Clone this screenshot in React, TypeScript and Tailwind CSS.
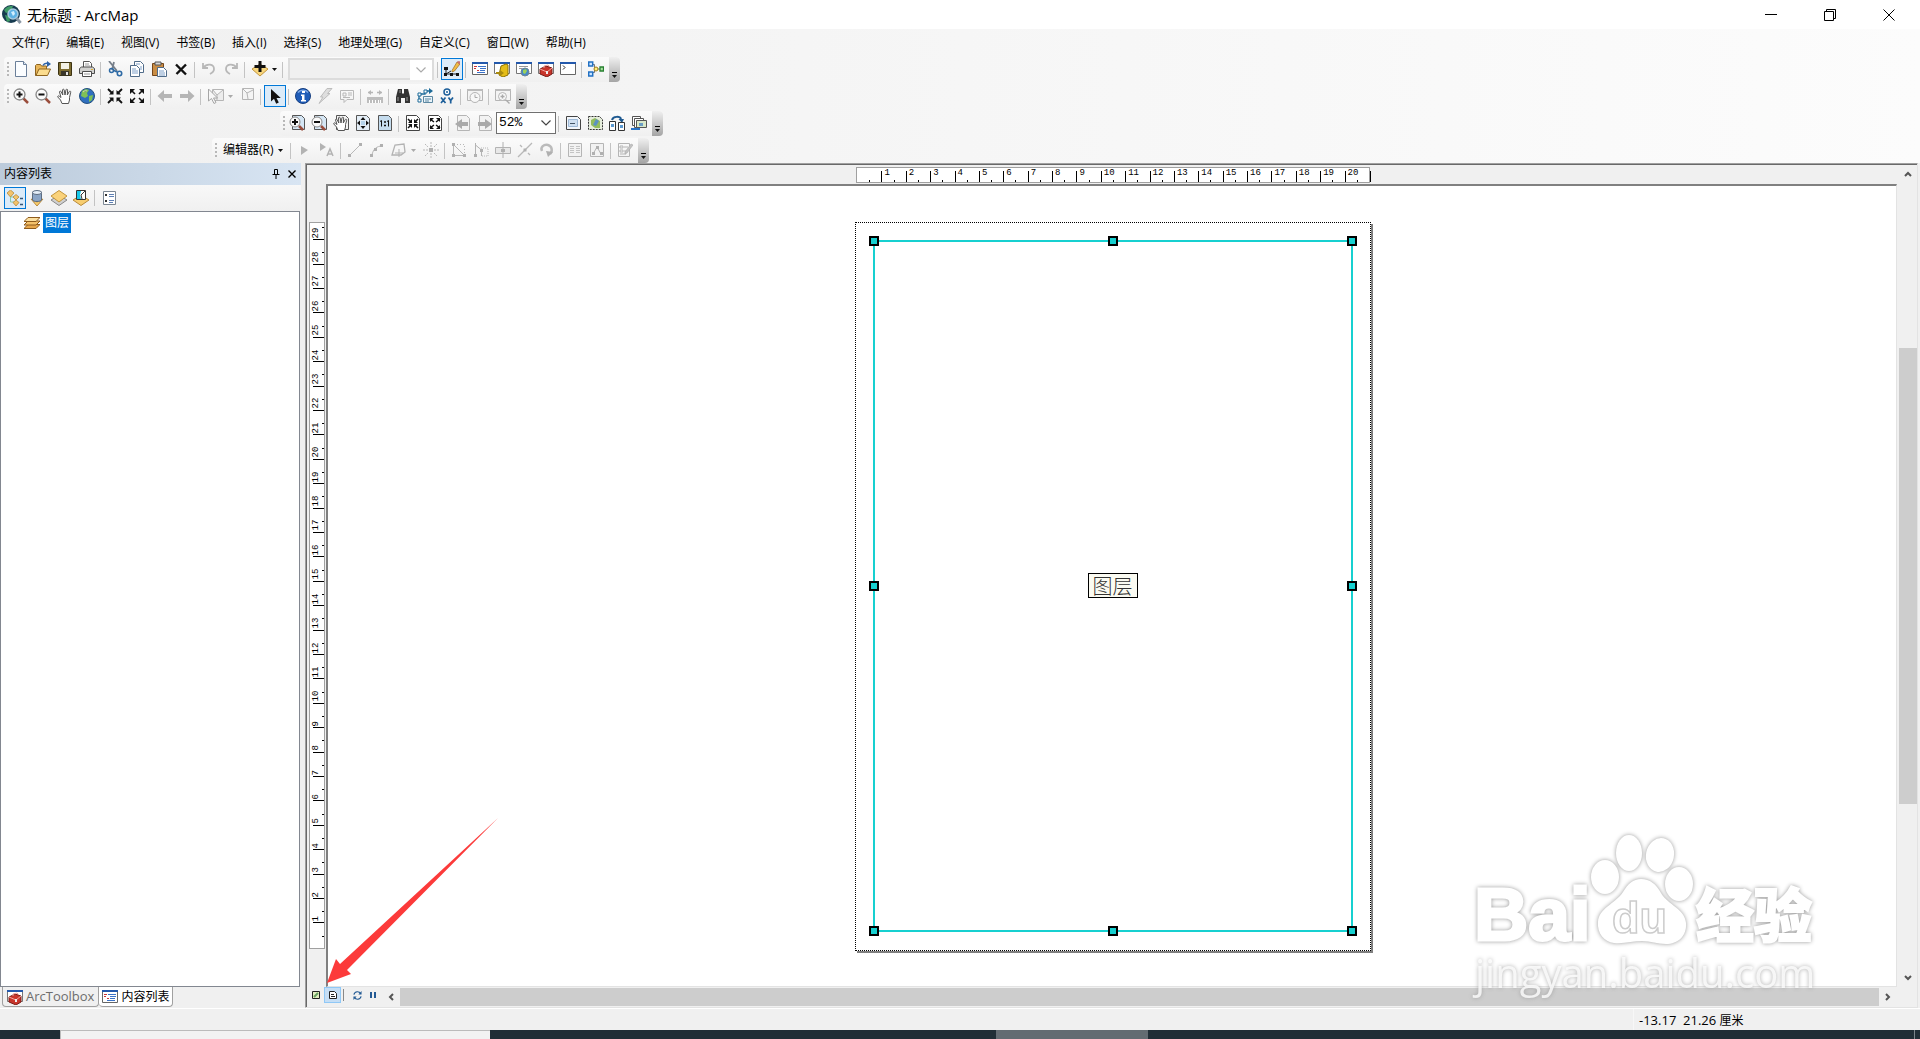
import type { ReactNode } from 'react'
import clsx from 'clsx'

const icons: Record<string, ReactNode> = {
  new: (
    <>
      <path d="M2.5.5h8l3 3v12h-11z" fill="#fbfdff" stroke="#6b7f99" />
      <path d="M10.500.5v3h3" fill="#dce8f5" stroke="#6b7f99" />
    </>
  ),
  open: (
    <>
      <path d="M.5 14.500v-10l1-1h4l1 1.500h5v9.500z" fill="#e8b65a" stroke="#8d6420" />
      <path d="M1 14.500 4 8h11.500l-3 6.500z" fill="#fbdc8e" stroke="#8d6420" />
      <path d="M8 4.500C9 2.500 10.500 2 13 2.500" fill="none" stroke="#2c62a8" strokeWidth="1.500" />
      <path d="M12 0l4 3-4 3z" fill="#2c62a8" />
    </>
  ),
  save: (
    <>
      <path d="M1.500 1.500h13v13h-12l-1-1z" fill="#7c6b30" stroke="#3b3212" />
      <path d="M4 2h8v6H4z" fill="#f3f1e6" />
      <path d="M4 10h8v4.500H4z" fill="#39362b" />
      <path d="M9 11h2v3H9z" fill="#e6e6e6" />
    </>
  ),
  print: (
    <>
      <path d="M4.500 6.500v-6h6l2 2v4" fill="#fff" stroke="#555" />
      <path d="M.5 7.500l2-1.500h11l2 1.500v5H.5z" fill="#d2d2d0" stroke="#4d4d4d" />
      <path d="M3.500 10.500h9v5h-9z" fill="#fff" stroke="#4d4d4d" />
      <path d="M12 8h2v1h-2z" fill="#e0b030" />
      <path d="M6 3h4M6 5h5M5 13h6" stroke="#999" />
    </>
  ),
  cut: (
    <>
      <path d="M2 0l8 10M7 1 5 9" stroke="#777f8a" strokeWidth="1.800" />
      <circle cx="4.500" cy="9.500" r="2" fill="none" stroke="#2e6aa5" strokeWidth="1.500" />
      <circle cx="12.500" cy="12.500" r="2.200" fill="none" stroke="#2e6aa5" strokeWidth="1.600" />
      <path d="M6 9l4 2" stroke="#2e6aa5" strokeWidth="1.500" />
    </>
  ),
  copy: (
    <>
      <path d="M5.500.5h6l3 3v8h-9z" fill="#fff" stroke="#4f6b89" />
      <path d="M1.500 4.500h6l3 3v8h-9z" fill="#fff" stroke="#4f6b89" />
      <path d="M3 8h4M3 10h6M3 12h6M7 3h4M11 6h2M11 8h2" stroke="#7fa0c8" />
    </>
  ),
  paste: (
    <>
      <path d="M1.500 2.500h11v12h-11z" fill="#c98d45" stroke="#74461a" />
      <path d="M4 1h6v3H4z" fill="#d8d8d8" stroke="#555" />
      <path d="M6.500 6.500h6l3 3v6h-9z" fill="#fff" stroke="#4f6b89" />
      <path d="M8 10h5M8 12h6M8 14h6" stroke="#7fa0c8" />
    </>
  ),
  remove: <path d="M3 3.500l10 10M13 3.500l-9.500 9.500" stroke="#111" strokeWidth="2.400" />,
  undo: <path d="M2 2v5h5M2.500 6.500C6 2 13 3 13 8c0 3-2 4-4 5" fill="none" stroke="#b8b8b8" strokeWidth="1.800" />,
  redo: <path d="M14 2v5H9M13.500 6.500C10 2 3 3 3 8c0 3 2 4 4 5" fill="none" stroke="#b8b8b8" strokeWidth="1.800" />,
  addData: (
    <>
      <path d="M0 8l8-5 8 5-8 7z" fill="#f8d67c" stroke="#c3953c" />
      <path d="M6.500 0h3v4h4v3h-4v4h-3V7h-4V4h4z" fill="#111" />
    </>
  ),
  editor: (
    <>
      <path d="M2 7v6h12M2 13l5-3" fill="none" stroke="#222" />
      <path d="M0 6h4v3H0zM0 12h3v3H0zM6 12h3v3H6zM12 12h3v3h-3z" fill="#111" />
      <path d="M8 9.500 13 1l3 2-5.500 7L8 11z" fill="#f2bd45" stroke="#9a6a24" strokeWidth=".7" />
      <path d="M13 .5l2.500-.5 1 2-1.500 1.500z" fill="#c9706e" />
    </>
  ),
  contents: (
    <>
      <path d="M.5 1.500h15v12H.5z" fill="#fff" stroke="#666" />
      <path d="M0 1h16v2H0z" fill="#2358ab" />
      <path d="M2 5.500h3M5 9.500h2M2 7.500h2" stroke="#c33" />
      <path d="M6 5.500h8M8 7.500h6M8 9.500h5M5 11.500h8" stroke="#3a72c8" />
    </>
  ),
  catalog: (
    <>
      <path d="M.5 1.500h15v11H.5z" fill="#fff" stroke="#777" />
      <path d="M0 1h16v2H0z" fill="#2358ab" />
      <path d="M7 5l5-2 2 1v10l-5 2-4-2z" fill="#e5bd17" stroke="#8f7200" />
      <path d="M2 11h4v-2l4 3-4 3v-2H2z" fill="#a98b10" />
    </>
  ),
  search: (
    <>
      <path d="M.5 1.500h15v11H.5z" fill="#fff" stroke="#777" />
      <path d="M0 1h16v2H0z" fill="#2358ab" />
      <path d="M3 5.500h9M3 7.500h3" stroke="#999" />
      <circle cx="9" cy="11" r="4" fill="#4688c9" stroke="#6c8496" />
      <path d="M7 9l3-1 1 2-2 3-2-1z" fill="#9bd15a" />
    </>
  ),
  toolbox: (
    <>
      <path d="M.5 1.500h15v11H.5z" fill="#fff" stroke="#777" />
      <path d="M0 1h16v2H0z" fill="#2358ab" />
      <path d="M2 8l6-3 6 2v6l-5 3-7-3z" fill="#c8352b" stroke="#7b1c17" />
      <path d="M2 8l7 3 5-4M6 7V5l4-1 2 2" fill="none" stroke="#f3a59e" />
      <path d="M8 10h2v3H8z" fill="#eee" />
    </>
  ),
  python: (
    <>
      <path d="M.5 1.500h15v12H.5z" fill="#fff" stroke="#666" />
      <path d="M0 1h16v2H0z" fill="#2358ab" />
      <path d="M3 4.500l2 2-2 2" fill="none" stroke="#222" />
    </>
  ),
  model: (
    <>
      <path d="M5 3.500h1.500v8H5M7 8h8" fill="none" stroke="#777" />
      <path d="M.7 1h4v4h-4zM.7 11h4v4h-4z" fill="#cfe6ff" stroke="#2271c4" strokeWidth="1.500" />
      <circle cx="8" cy="8" r="2" fill="#fff07a" stroke="#a17d1a" />
      <path d="M12 6h3.500v4H12z" fill="#a8e0a0" stroke="#278030" strokeWidth="1.300" />
    </>
  ),
  zoomIn: (
    <>
      <path d="M10 10l5 5" stroke="#9a4d3c" strokeWidth="2.500" />
      <circle cx="6.500" cy="6.500" r="5.500" fill="#fafafa" stroke="#888" strokeWidth="1.300" />
      <path d="M3.500 6.500h6M6.500 3.500v6" stroke="#111" strokeWidth="2" />
    </>
  ),
  zoomOut: (
    <>
      <path d="M10 10l5 5" stroke="#9a4d3c" strokeWidth="2.500" />
      <circle cx="6.500" cy="6.500" r="5.500" fill="#fafafa" stroke="#888" strokeWidth="1.300" />
      <path d="M3.500 6.500h6" stroke="#111" strokeWidth="2" />
    </>
  ),
  hand: (
    <path
      d="M5 15.500 3.500 12 .8 9c-.5-1 .8-1.600 1.500-.8L4 9.500 2.500 4c0-1.200 1.300-1.200 1.700-.2L5.800 7 5.500 2c.2-1.200 1.500-1 1.700 0l.8 5L9 1.800c.4-1 1.600-.8 1.600.3L10.300 7l2-3.500c.7-.8 1.700-.2 1.400.8L12.500 9.500v2.500l-1 3.500z"
      fill="#fff"
      stroke="#555"
    />
  ),
  globe: (
    <>
      <circle cx="8" cy="8" r="7.500" fill="#2f6fbe" stroke="#24507f" />
      <path d="M3 3c3-2 5-2 7-1l-2 3 1 3-3 2-4-2zM10 8l4-1-1 5-3 2z" fill="#7fc256" />
      <path d="M4 4c1-1 3-1.500 4-1" stroke="#dff0c5" />
    </>
  ),
  fixedIn: (
    <>
      <path d="M1 1l4 4M15 1l-4 4M1 15l4-4M15 15l-4-4" stroke="#111" strokeWidth="1.800" />
      <path d="M6.500 2v4.500H2zM9.500 2v4.500H14zM6.500 14V9.500H2zM9.500 14V9.500H14z" fill="#111" />
    </>
  ),
  fixedOut: (
    <>
      <path d="M2 2l4 4M14 2l-4 4M2 14l4-4M14 14l-4-4" stroke="#111" strokeWidth="1.600" />
      <path d="M1 1h5L1 6zM15 1h-5l5 5zM1 15h5l-5-5zM15 15h-5l5-5z" fill="#111" />
    </>
  ),
  back: <path d="M7 2v4h8v4H7v4L.5 8z" fill="#b5b5b5" />,
  forward: <path d="M9 2v4H1v4h8v4l6.500-6z" fill="#b5b5b5" />,
  selectFeature: (
    <>
      <path d="M4.500 1.500h11v11h-11zM5 2l4 5 6-5M9 7v5" fill="#ececec" stroke="#b5b5b5" />
      <path d="M.5 1v12l3-2.500 2.500 5 2-1-2.500-4.500h4z" fill="#f7f7f7" stroke="#a6a6a6" />
    </>
  ),
  clear: <path d="M3.500.5h11v11h-11zM4 1l4 4 6-3M8 5l1 6" fill="#f4f4f4" stroke="#b5b5b5" />,
  pointer: <path d="M4 1v12.500l3-2.800 2.200 5 2.600-1.200L9.500 10h4.300z" fill="#111" />,
  info: (
    <>
      <circle cx="8" cy="8" r="7.500" fill="#1f5cb8" stroke="#173f80" />
      <path d="M3 4.500C5 1.500 11 1.500 13 4.500" stroke="#7fa9e6" fill="none" strokeWidth="1.500" />
      <path d="M7 3h3v2H7zM6 6.500h3.500V12H11v1.500H6V12h1V8H6z" fill="#fff" />
    </>
  ),
  bolt: <path d="M10 .5h5L10.500 5.500H13L2 15.500 6 9H3.500z" fill="#dedede" stroke="#bcbcbc" />,
  popup: <path d="M1.500 2.500h13v9H8l-3 3v-3H1.500zM4 5h3v3H4zM9 5h4M9 7h4M4 9.500h7" fill="none" stroke="#b8b8b8" />,
  measure: (
    <>
      <path d="M1 4.500h5M10 4.500h5" stroke="#b5b5b5" strokeWidth="1.500" />
      <path d="M4 2v5L1 4.500zM12 2v5l3-2.500z" fill="#b5b5b5" />
      <path d="M0 9h16v6H0z" fill="#bdbdbd" />
      <path d="M2.500 12v3M5.500 12v3M8.500 12v3M11.500 12v3M13.500 12v3" stroke="#fff" />
    </>
  ),
  find: (
    <>
      <path d="M3 1h4v4l1 1 1-1V1h4l2 8v6h-5v-5H6v5H1V9z" fill="#333" />
      <path d="M3 9v4M12 9v4M5 2v3" stroke="#999" />
    </>
  ),
  route: (
    <>
      <path d="M2 12V6h6V3h6" fill="none" stroke="#1d6a98" strokeWidth="1.300" />
      <path d="M12 0l4 3-4 3z" fill="#1d6a98" />
      <path d="M1 5h3v3H1zM1 11h3v3H1zM7 2h3v3H7z" fill="#fff" stroke="#1d6a98" />
      <path d="M6.500 8.500h9v6h-9z" fill="#eaf4fa" stroke="#5c88a2" />
      <path d="M8 11h6M8 13h4" stroke="#5c88a2" />
    </>
  ),
  xy: (
    <>
      <circle cx="8" cy="4" r="3" fill="#fff" stroke="#1d5f9a" strokeWidth="1.500" />
      <circle cx="8" cy="4" r="1" fill="#1d5f9a" />
      <path d="M2 9.500l4.500 5.500M6.500 9.500 2 15M9.500 9.500l2.200 3 2.300-3M11.700 12v3.500" fill="none" stroke="#1d5f9a" strokeWidth="1.700" />
    </>
  ),
  time: (
    <>
      <path d="M.5 1.500h15v11H.5z" fill="#f4f4f4" stroke="#b5b5b5" />
      <path d="M0 1h16v2H0z" fill="#bcbcbc" />
      <circle cx="8" cy="9.500" r="5" fill="#f8f8f8" stroke="#b5b5b5" />
      <path d="M8 6.500v3h2.500" fill="none" stroke="#aaa" />
    </>
  ),
  viewer: (
    <>
      <path d="M.5 1.500h15v11H.5z" fill="#f4f4f4" stroke="#b5b5b5" />
      <path d="M0 1h16v2H0z" fill="#bcbcbc" />
      <circle cx="7.500" cy="8.500" r="4" fill="#f8f8f8" stroke="#b5b5b5" />
      <path d="M5.500 8.500h4M7.500 6.500v4M11 12l3.500 3.500" stroke="#aaa" strokeWidth="1.400" />
    </>
  ),
  pageZoomIn: (
    <>
      <path d="M3.500.5h9l3 3v11h-12z" fill="#d5e6f4" stroke="#555" />
      <path d="M10 11l4 4" stroke="#9a4d3c" strokeWidth="2.500" />
      <circle cx="6" cy="7" r="5" fill="#fafafa" stroke="#888" />
      <path d="M3 7h6M6 4v6" stroke="#111" strokeWidth="2" />
    </>
  ),
  pageZoomOut: (
    <>
      <path d="M3.500.5h9l3 3v11h-12z" fill="#d5e6f4" stroke="#555" />
      <path d="M10 11l4 4" stroke="#9a4d3c" strokeWidth="2.500" />
      <circle cx="6" cy="7" r="5" fill="#fafafa" stroke="#888" />
      <path d="M3 7h6" stroke="#111" strokeWidth="2" />
    </>
  ),
  pageHand: (
    <>
      <path d="M3.500.5h9l3 3v11h-12z" fill="#f3f3f3" stroke="#555" />
      <path
        d="M5 15.500 3.500 12 .8 9c-.5-1 .8-1.600 1.500-.8L4 9.500 2.500 5c0-1.200 1.300-1.200 1.700-.2L5.800 8 5.500 3c.2-1.200 1.500-1 1.700 0l.8 5L9 2.800c.4-1 1.600-.8 1.600.3L10.300 8l2-3.500c.7-.8 1.700-.2 1.400.8L12.500 9.500v2.500l-1 3.500z"
        fill="#fff"
        stroke="#555"
      />
    </>
  ),
  pageFull: (
    <>
      <path d="M1.500.5h10l3 3v12h-13z" fill="#e4eef7" stroke="#555" />
      <path d="M8 2l2.500 3h-5zM8 14l2.500-3h-5zM2 8l3-2.500v5zM14 8l-3-2.500v5z" fill="#111" />
      <path d="M6 6h4v4H6z" fill="#b5d3ea" />
    </>
  ),
  pageActual: (
    <>
      <path d="M1.500.5h10l3 3v12h-13z" fill="#c5dcee" stroke="#555" />
      <path d="M3 6.500 4.500 5.500v6M7.500 6.500h1v1h-1zM7.500 10h1v1h-1zM10 6.500l1.500-1v6" fill="none" stroke="#111" />
    </>
  ),
  pageFixedIn: (
    <>
      <path d="M1.500.5h10l3 3v12h-13z" fill="#fff" stroke="#444" />
      <path d="M3 4l3 3M13 4l-3 3M3 13l3-3M13 13l-3-3" stroke="#111" strokeWidth="1.500" />
      <path d="M7 4v4H3zM9 4v4h4zM7 13V9H3zM9 13V9h4z" fill="#111" />
    </>
  ),
  pageFixedOut: (
    <>
      <path d="M1.500.5h10l3 3v12h-13z" fill="#fff" stroke="#444" />
      <path d="M3 4l4 3M13 4 9 7M3 13l4-3M13 13l-4-3" stroke="#111" strokeWidth="1.500" />
      <path d="M3 3h4L3 7zM13 3H9l4 4zM3 14h4l-4-4zM13 14H9l4-4z" fill="#111" />
    </>
  ),
  pageBack: (
    <>
      <path d="M2.500.5h9l3 3v12h-12z" fill="#f3f3f3" stroke="#b5b5b5" />
      <path d="M7 4v3h6v4H7v3L0 9z" fill="#aaa" />
    </>
  ),
  pageForward: (
    <>
      <path d="M2.500.5h9l3 3v12h-12z" fill="#f3f3f3" stroke="#b5b5b5" />
      <path d="M8 4v3H1v4h7v3l7-5z" fill="#aaa" />
    </>
  ),
  draft: (
    <>
      <path d="M1.500 1.500h11l3 3v10h-14z" fill="#f2f6fb" stroke="#444" />
      <path d="M3.500 4.500h9v7h-9z" fill="#d0e0f1" stroke="#9db8d6" />
      <path d="M5 8.500h5" stroke="#456" />
    </>
  ),
  focus: (
    <>
      <path d="M1.500 1.500h11l3 3v10h-14z" fill="#e6eedd" stroke="#333" strokeDasharray="2 1" />
      <path d="M4 5l4-2 5 3v7H8l-4-3z" fill="#94bd5d" />
      <path d="M9 4l3 2-3 5-3-1z" fill="#5b92c4" />
    </>
  ),
  changeLayout: (
    <>
      <path d="M3 5c1-4 8-4 9-1" fill="none" stroke="#1f5a91" strokeWidth="2" />
      <path d="M9.500 4H15l-2 4z" fill="#1f5a91" />
      <path d="M.5 6.500h6v9h-6zM9.500 7.500h6v8h-6z" fill="#fff" stroke="#333" />
      <path d="M2 9h3v3H2zM11 10h3v3h-3z" fill="#5c9ad1" />
    </>
  ),
  drivenPages: (
    <>
      <path d="M1.500 1.500h8v9h-8z" fill="#fff" stroke="#555" />
      <path d="M3.500 3.500h9v9h-9z" fill="#fff" stroke="#555" />
      <path d="M5.500 5.500h10v7h-10z" fill="#d9e8c9" stroke="#555" />
      <path d="M8 8h4v3H8z" fill="#6a9ec5" />
      <path d="M0 13h9v2H0z" fill="#2873c7" />
    </>
  ),
  editTool: <path d="M4 4v9l7-5z" fill="#b3b3b3" />,
  editAnno: (
    <>
      <path d="M1 1v8l6-4z" fill="#b3b3b3" />
      <path d="M8 14l3-7 3 7M9 12h4" fill="none" stroke="#b3b3b3" strokeWidth="1.500" />
    </>
  ),
  line: (
    <>
      <path d="M3 13 13 3" stroke="#b8b8b8" />
      <path d="M1 12h3v3H1zM12 1h3v3h-3z" fill="#b0b0b0" />
    </>
  ),
  arc: (
    <>
      <path d="M3 13C4 7 8 4 13 4" fill="none" stroke="#b8b8b8" />
      <path d="M1 12h3v3H1zM5 6h3v3H5zM11 2h3v3h-3z" fill="#b0b0b0" />
    </>
  ),
  trace: (
    <>
      <path d="M1 13 4 3l9-1 1 8-4 3z" fill="none" stroke="#b3b3b3" strokeWidth="1.300" />
      <path d="M8 7v8M4 11h8" stroke="#b3b3b3" />
    </>
  ),
  point: (
    <>
      <path d="M8 0v5M8 11v5M0 8h5M11 8h5M2 2l3 3M11 11l3 3M2 14l3-3M11 5l3-3" stroke="#b8b8b8" strokeDasharray="2 1" />
      <path d="M6 6h4v4H6z" fill="#b0b0b0" />
    </>
  ),
  vertices: (
    <>
      <path d="M2.500 13.500v-11l11 11z" fill="none" stroke="#b8b8b8" />
      <path d="M3 2.500h10.500v11" fill="none" stroke="#b8b8b8" strokeDasharray="1 2" />
      <path d="M1 1h3v3H1zM1 12h3v3H1zM12 12h3v3h-3z" fill="#b0b0b0" />
    </>
  ),
  reshape: (
    <>
      <path d="M2.500 1v13.500M2.500 3l6 5v6" fill="none" stroke="#b3b3b3" />
      <path d="M8 6h7v8H8" fill="none" stroke="#b8b8b8" strokeDasharray="1 1" />
      <path d="M1 12h3v3H1zM7 7h3v3H7z" fill="#b0b0b0" />
    </>
  ),
  cutPoly: (
    <>
      <path d="M.5 5.500h15v6H.5z" fill="#e8e8e8" stroke="#b3b3b3" />
      <path d="M8 0v16" stroke="#b0b0b0" />
      <path d="M6 7h4v3H6z" fill="#b0b0b0" />
    </>
  ),
  split: (
    <>
      <path d="M1 15 15 1M3 3l2 2M11 11l2 2" stroke="#b8b8b8" strokeWidth="1.300" />
      <path d="M6.500 6.500h3v3h-3z" fill="#b0b0b0" />
    </>
  ),
  rotate: (
    <>
      <path d="M3 9C1 5 5 2 9 3c4 1 5 6 2 9" fill="none" stroke="#bbb" strokeWidth="2.500" />
      <path d="M7 9l7 1-5 5z" fill="#b0b0b0" />
    </>
  ),
  attributes: (
    <>
      <path d="M1.500 1.500h13v13h-13z" fill="#f2f2f2" stroke="#b5b5b5" />
      <path d="M3 4.500h4M9 4.500h4M3 6.500h4M9 6.500h4M3 8.500h4M9 8.500h4M3 10.500h4M9 10.500h4" stroke="#c4c4c4" />
    </>
  ),
  sketch: (
    <>
      <path d="M1.500 1.500h13v13h-13z" fill="#f2f2f2" stroke="#b5b5b5" />
      <path d="M4 12 8 5l4 7" fill="none" stroke="#b5b5b5" />
      <path d="M3 10h3v3H3zM7 4h3v3H7zM11 10h3v3h-3z" fill="#b0b0b0" />
    </>
  ),
  template: (
    <>
      <path d="M1.500 1.500h11v13h-11zM3 4h3v2H3zM3 8h3v2H3zM7 5h4M7 9h3M3 12h6" fill="none" stroke="#b5b5b5" />
      <path d="M8 10l6-8 2 1-6 8-2 1z" fill="#c4c4c4" stroke="#aaa" strokeWidth=".6" />
    </>
  ),
  byOrder: (
    <>
      <path d="M3.500 4v8h5M3.500 7h5" fill="none" stroke="#8ca" />
      <path d="M0 3l3.500-3L7 3 3.500 7zM6 7l3-2.500L12 7 9 10zM6 12.500l3-2.500 3 2.500L9 16z" fill="#f3c46c" stroke="#b98a3a" strokeWidth=".8" />
      <path d="M13 8.500h3M13 14.500h3" stroke="#357" strokeWidth="1.500" />
    </>
  ),
  bySource: (
    <>
      <path d="M2 9l6 3 6-3-6 7z" fill="#f7cd6f" stroke="#b98a3a" />
      <path d="M3.500 2v8c1 2 8 2 9 0V2z" fill="#8ba5c6" stroke="#5c6c80" />
      <ellipse cx="8" cy="2.500" rx="4.500" ry="2" fill="#e5eef8" stroke="#5c6c80" />
    </>
  ),
  byVisibility: (
    <>
      <path d="M0 10l8-5 8 5-8 5.500z" fill="#d0d0d0" stroke="#888" />
      <path d="M0 6l8-5.500L16 6l-8 6z" fill="#fad27a" stroke="#c3953c" />
    </>
  ),
  bySelection: (
    <>
      <path d="M0 10l8-5 8 5-8 5.500z" fill="#f7cd6f" stroke="#b98a3a" />
      <path d="M3.500.5h9v9h-9z" fill="#fff" stroke="#333" />
      <path d="M4 1h4l-1 4 1 4H4z" fill="#17c8e8" />
      <path d="M12 1 8 5l1 4" fill="none" stroke="#333" />
    </>
  ),
  options: (
    <>
      <path d="M2.500 1.500h12v13h-12z" fill="#fff" stroke="#7b8794" />
      <path d="M4 4h2v2H4zM4 10h2v2H4z" fill="#333" />
      <path d="M8 4.500h5M8 6.500h5M8 10.500h5M8 12.500h4" stroke="#5d7fb4" />
    </>
  ),
  layers: (
    <>
      <path d="M0 13.500l4-4h12l-4 4z" fill="#e8a84c" stroke="#8e5b1c" />
      <path d="M0 10l4-4h12l-4 4z" fill="#f5c26b" stroke="#8e5b1c" />
      <path d="M0 6.500l4-4h12l-4 4z" fill="#fce0a0" stroke="#8e5b1c" />
    </>
  ),
}

function Icon({ name, className = 'size-4' }: { name: string; className?: string }) {
  return (
    <svg viewBox="0 0 16 16" className={clsx('shrink-0', className)} aria-hidden="true">
      {icons[name]}
    </svg>
  )
}

function Tool({ name, active, menu }: { name: string; active?: boolean; menu?: boolean }) {
  return (
    <button
      type="button"
      aria-label={name}
      className={clsx(
        'flex h-[22px] shrink-0 items-center justify-center gap-1',
        menu ? 'w-8' : 'w-[22px]',
        active && 'border border-[#0078d7] bg-[#dcebf8]',
      )}
    >
      <Icon name={name} />
      {menu && <Caret muted={name !== 'addData'} />}
    </button>
  )
}

function Caret({ muted }: { muted?: boolean }) {
  return (
    <svg viewBox="0 0 5 3" className="h-[3px] w-[5px] shrink-0" aria-hidden="true">
      <path d="M0 0h5L2.500 3z" fill={muted ? '#aaa' : '#111'} />
    </svg>
  )
}

function Sep() {
  return <span className="my-1 mr-[3px] ml-[2px] h-4 w-px shrink-0 bg-[#c3c3c3]" />
}

// '|' is a separator, a trailing '+' adds a menu arrow, a leading '*' marks the pressed tool
function Tools({ items }: { items: string }) {
  return items.split(' ').map((item, i) =>
    item === '|' ? (
      <Sep key={i} />
    ) : (
      <Tool key={i} name={item.replace(/[*+]/g, '')} active={item.startsWith('*')} menu={item.endsWith('+')} />
    ),
  )
}

function Toolbar({ label, className, children }: { label: string; className?: string; children: ReactNode }) {
  return (
    <div
      role="toolbar"
      aria-label={label}
      className={clsx('flex h-[25px] w-max rounded-sm bg-gradient-to-b from-[#fbfbfb] to-[#f0f0f0]', className)}
    >
      <div className="flex pt-px pl-[3px]">
        <span className="mt-1 mr-px h-[14px] w-0 border-l-2 border-dotted border-[#b8b8b8]" />
        {children}
      </div>
      <button
        type="button"
        aria-label={`${label} options`}
        className="ml-[2px] flex w-[11px] flex-col items-center justify-end gap-[2px] rounded-r-sm bg-gradient-to-b from-[#f0f0f0] to-[#a5a5a5] pb-1"
      >
        <span className="h-px w-[5px] bg-black" />
        <Caret />
      </button>
    </div>
  )
}

function Chevron({ className }: { className?: string }) {
  return (
    <svg viewBox="0 0 10 6" className={clsx('h-[6px] w-[10px]', className)} aria-hidden="true">
      <path d="M.5.5 5 5 9.500.5" fill="none" stroke="currentColor" strokeWidth="1.200" />
    </svg>
  )
}

function ScrollArrow({ label, className }: { label: string; className?: string }) {
  return (
    <button type="button" aria-label={label} className="flex size-[18px] shrink-0 items-center justify-center text-[#555]">
      <svg viewBox="0 0 8 6" className={clsx('h-[6px] w-2', className)} aria-hidden="true">
        <path d="M1 1l3 3 3-3" fill="none" stroke="currentColor" strokeWidth="2" />
      </svg>
    </button>
  )
}

const menus = ['文件(F)', '编辑(E)', '视图(V)', '书签(B)', '插入(I)', '选择(S)', '地理处理(G)', '自定义(C)', '窗口(W)', '帮助(H)']

const across = Array.from({ length: 21 }, (_, i) => i)
const down = Array.from({ length: 29 }, (_, i) => 28 - i)

function HorizontalRuler() {
  return (
    <div className="relative flex h-4 w-[514px] border border-[#a0a0a0] bg-white font-['Liberation_Mono'] text-[9px] leading-[10px]">
      {across.map((cm) => (
        <div key={cm} className="relative flex-1">
          {cm > 0 && (
            <>
              <span className="absolute bottom-0 left-0 h-[11px] w-px bg-black" />
              <span className="absolute top-0 left-[3px]">{cm}</span>
            </>
          )}
          <span className="absolute bottom-0 left-1/2 h-[2px] w-px bg-black" />
        </div>
      ))}
      <span className="absolute -right-[2px] bottom-0 h-[11px] w-px bg-black" />
    </div>
  )
}

function VerticalRuler() {
  return (
    <div className="ml-[2px] flex h-[727px] w-4 flex-col border border-[#a0a0a0] bg-white font-['Liberation_Mono'] text-[9px] leading-[10px]">
      <div className="relative flex-[0.7]">
        <VerticalMark cm={29} />
        <span className="absolute top-1 right-0 h-px w-[2px] bg-black" />
      </div>
      {down.map((cm) => (
        <div key={cm} className="relative flex-1">
          {cm > 0 && <VerticalMark cm={cm} />}
          <span className="absolute top-1/2 right-0 h-px w-[2px] bg-black" />
        </div>
      ))}
    </div>
  )
}

function VerticalMark({ cm }: { cm: number }) {
  return (
    <>
      <span className="absolute right-0 bottom-0 h-px w-[11px] bg-black" />
      <span className="absolute bottom-[2px] left-0 flex h-[11px] w-[10px] items-center justify-center">
        <span className="w-[11px] shrink-0 -rotate-90">{cm}</span>
      </span>
    </>
  )
}

const handles = [
  '-top-[6px] -left-[6px]',
  '-top-[6px] left-1/2 -translate-x-1/2',
  '-top-[6px] -right-[6px]',
  'top-1/2 -left-[6px] -translate-y-1/2',
  'top-1/2 -right-[6px] -translate-y-1/2',
  '-bottom-[6px] -left-[6px]',
  '-bottom-[6px] left-1/2 -translate-x-1/2',
  '-bottom-[6px] -right-[6px]',
]

function LayoutPage() {
  return (
    <div className="flex h-[729px] w-[516px] shrink-0 border border-dotted border-black bg-white px-[17px] pt-[17px] pb-[18px] shadow-[2px_2px_0_#808080]">
      <div className="relative flex flex-1 items-center justify-center border-2 border-[#16d0d0]">
        {handles.map((position) => (
          <span key={position} className={clsx('absolute size-[10px] border-2 border-black bg-[#16d0d0]', position)} />
        ))}
        <span className="border border-black bg-[#fbfbf2] px-1 font-['Noto_Sans_CJK_SC',sans-serif] text-xl leading-[23px] font-light text-[#333]">
          图层
        </span>
      </div>
    </div>
  )
}

function Watermark() {
  return (
    <svg
      viewBox="0 0 350 170"
      className="pointer-events-none absolute right-[100px] bottom-[39px] h-[170px] w-[350px] drop-shadow-[0_0_2px_#999]"
      fill="#fff"
      aria-hidden="true"
    >
      <text x="4" y="110" fontFamily="Liberation Sans, sans-serif" fontWeight="700" fontSize="75" stroke="#fff" strokeWidth="3">
        Bai
      </text>
      <ellipse cx="135" cy="47" rx="14" ry="17" />
      <ellipse cx="159" cy="23" rx="13" ry="18" />
      <ellipse cx="190" cy="25" rx="14" ry="17" transform="rotate(12 190 25)" />
      <ellipse cx="209" cy="54" rx="14" ry="17" />
      <path d="M171 49c9 0 15 5 20 14 7 12 24 16 25 30 1 13-8 21-20 21-9 0-15-3-24-3s-18 3-28 2c-10-1-17-10-16-21 1-14 17-18 25-30 5-8 10-13 18-13z" />
      <text x="142" y="103" fontFamily="Liberation Sans, sans-serif" fontWeight="700" fontSize="45" stroke="#ccc" strokeWidth="1.500">
        du
      </text>
      <text x="226" y="107" fontFamily="Noto Sans CJK SC, sans-serif" fontWeight="900" fontSize="58" stroke="#fff" strokeWidth="2">
        经验
      </text>
      <text x="5" y="158" fontFamily="Open Sans, sans-serif" fontSize="40" opacity=".8">
        jingyan.baidu.com
      </text>
    </svg>
  )
}

function TitleBar() {
  return (
    <header className="flex h-[29px] shrink-0 items-center bg-white pl-[2px]">
      <svg viewBox="0 0 20 20" className="size-5" aria-hidden="true">
        <circle cx="9" cy="9" r="9" fill="#173b50" />
        <path d="M2 5c3-4 6-4 9-4l-2 5-5 2zM3 10l4 1 1 5-3 1z" fill="#3f9b67" />
        <circle cx="11" cy="9" r="5" fill="#5fb2e4" stroke="#a9cbe0" strokeWidth="1.500" />
        <path d="M9 7l3-1 1 3-2 2z" fill="#d2efff" />
        <path d="M14.500 13l4 5" stroke="#8b98a5" strokeWidth="3" />
      </svg>
      <h1 className="ml-[5px] text-[15px] leading-5">无标题 - ArcMap</h1>
      <div className="ml-auto flex h-full text-black">
        {[
          ['Minimize', 'M0 5.500h12'],
          ['Restore', 'M.5 2.500h9v9h-9zM2.500 2V.5h9v9H10'],
          ['Close', 'M.5.5l11 11M11.500.5l-11 11'],
        ].map(([label, d]) => (
          <button key={label} type="button" aria-label={label} className="flex w-[59px] items-center justify-center">
            <svg viewBox="0 0 12 12" className="size-3" aria-hidden="true">
              <path d={d} fill="none" stroke="#000" />
            </svg>
          </button>
        ))}
        <span className="w-[2px]" />
      </div>
    </header>
  )
}

function ContentsPane() {
  return (
    <aside className="flex w-[301px] shrink-0 flex-col">
      <div className="flex h-[22px] items-center bg-gradient-to-r from-[#bccbdb] to-[#d8e5f3] pr-px pl-1">
        <h2 className="flex-1 text-xs">内容列表</h2>
        <button type="button" aria-label="Pin" className="flex size-4 items-center justify-center">
          <svg viewBox="0 0 8 10" className="h-[10px] w-2" aria-hidden="true">
            <path d="M2.500 5V.5h3V5M.5 5.500h7M4 6v4" fill="none" stroke="#000" />
            <path d="M5 1h1v4H5z" />
          </svg>
        </button>
        <button type="button" aria-label="Close pane" className="flex size-4 items-center justify-center">
          <svg viewBox="0 0 8 8" className="size-2" aria-hidden="true">
            <path d="M.5.5l7 7M7.500.5l-7 7" stroke="#000" strokeWidth="1.400" />
          </svg>
        </button>
      </div>
      <div className="flex h-[26px] items-center bg-gradient-to-b from-[#f8f8f8] to-[#f0f0f0] pl-1">
        <Tools items="*byOrder bySource byVisibility bySelection | options" />
      </div>
      <div className="mr-px flex-1 border border-[#828790] bg-white py-px pl-[23px]">
        <div className="flex items-center gap-[3px]">
          <Icon name="layers" />
          <span className="bg-[#0078d7] px-[2px] text-xs leading-5 text-white">图层</span>
        </div>
      </div>
      <div className="flex h-[21px] shrink-0 pl-[2px] text-[13px]">
        <button
          type="button"
          className="flex h-5 items-center gap-[3px] rounded-b border border-t-0 border-[#a0a0a0] px-1 text-[#6d6d6d]"
        >
          <Icon name="toolbox" />
          ArcToolbox
        </button>
        <button type="button" className="flex h-5 items-center gap-[3px] rounded-b border border-t-0 border-l-0 border-[#a0a0a0] bg-white px-[3px] text-xs">
          <Icon name="contents" />
          内容列表
        </button>
      </div>
    </aside>
  )
}

function ViewBar() {
  return (
    <div className="flex h-5 shrink-0 items-center bg-[#f0f0f0]">
      <div className="flex items-center self-start">
        <button type="button" aria-label="Data view" className="flex w-[17px] items-center justify-center">
          <svg viewBox="0 0 8 8" className="size-2" aria-hidden="true">
            <path d="M.5.5h7v7h-7z" fill="#e3efc0" stroke="#222" />
            <path d="M2 6l4-4" stroke="#67a060" strokeWidth="2" />
          </svg>
        </button>
        <button type="button" aria-label="Layout view" className="flex h-4 w-[17px] items-center justify-center border border-[#90c8f6] bg-[#c5def5]">
          <svg viewBox="0 0 8 8" className="size-2" aria-hidden="true">
            <path d="M.5.5h5l2 2v5h-7z" fill="#fff" stroke="#222" />
            <path d="M2 3.500h3M2 5.500h4" stroke="#222" />
          </svg>
        </button>
        <span className="ml-[2px] h-3 w-px bg-[#888]" />
        <button type="button" aria-label="Refresh" className="ml-[5px] flex size-4 items-center justify-center">
          <svg viewBox="0 0 10 10" className="size-[9px]" aria-hidden="true">
            <path d="M1 4C2 0 7 0 8.500 3M9 6c-1 4-6 4-7.500 1" fill="none" stroke="#235a94" strokeWidth="1.300" />
            <path d="M9.500 0v4H6zM.5 10V6H4z" fill="#235a94" />
          </svg>
        </button>
        <button type="button" aria-label="Pause" className="mr-px flex size-4 items-center justify-center">
          <svg viewBox="0 0 6 6" className="size-[6px]" aria-hidden="true">
            <path d="M0 0h2v6H0zM4 0h2v6H4z" fill="#235a94" />
          </svg>
        </button>
      </div>
      <ScrollArrow label="Scroll left" className="rotate-90" />
      <div className="h-[18px] flex-1 bg-[#cdcdcd]" />
      <ScrollArrow label="Scroll right" className="-rotate-90" />
    </div>
  )
}

export default function App() {
  return (
    <div className="relative flex h-screen flex-col overflow-hidden bg-[#f0f0f0] font-['Open_Sans','Noto_Sans_CJK_SC',sans-serif] text-black">
      <TitleBar />
      <div className="flex shrink-0 flex-col bg-gradient-to-r from-[#f0f0f0] to-[#fcfcfc]">
        <nav className="flex h-7 items-center gap-[17px] pl-3 text-xs">
          {menus.map((menu) => (
            <button key={menu} type="button">
              {menu}
            </button>
          ))}
        </nav>
        <div className="flex flex-col gap-[2px]">
          <Toolbar label="Standard" className="ml-1">
            <Tools items="new open save print | cut copy paste remove | undo redo | addData+ |" />
            <div className="relative mr-px ml-[2px] text-[#aaa]">
              <select aria-label="Map scale" disabled className="block h-[22px] w-[146px] appearance-none border-2 border-[#dcdcdc] bg-[#f0f0f0]" />
              <span className="pointer-events-none absolute inset-y-[2px] right-[2px] flex w-[22px] items-center justify-center bg-white">
                <Chevron />
              </span>
            </div>
            <Tools items="| *editor | contents catalog search toolbox python | model" />
          </Toolbar>
          <Toolbar label="Tools" className="ml-1">
            <Tools items="zoomIn zoomOut hand globe | fixedIn fixedOut | back forward | selectFeature+ clear | *pointer | info bolt popup | measure | find route xy | time | viewer" />
          </Toolbar>
          <Toolbar label="Layout" className="ml-[280px]">
            <Tools items="pageZoomIn pageZoomOut pageHand pageFull pageActual | pageFixedIn pageFixedOut | pageBack pageForward" />
            <div className="relative">
              <select
                aria-label="Zoom"
                defaultValue="52%"
                className="block h-[22px] w-[60px] appearance-none border border-[#707070] bg-white pl-[2px] font-['Liberation_Mono'] text-[13px]"
              >
                <option>52%</option>
              </select>
              <Chevron className="pointer-events-none absolute top-2 right-[5px] text-[#444]" />
            </div>
            <Tools items="| draft focus changeLayout drivenPages" />
          </Toolbar>
          <Toolbar label="Editor" className="ml-[212px]">
            <button type="button" className="flex h-[22px] items-center gap-1 px-[5px] text-xs">
              编辑器(R)
              <Caret />
            </button>
            <Tools items="| editTool editAnno | line arc trace+ point | vertices reshape cutPoly split rotate | attributes sketch | template" />
          </Toolbar>
        </div>
      </div>

      <main className="flex min-h-0 flex-1 gap-1 pr-[2px]">
        <ContentsPane />
        <div className="flex min-w-0 flex-1 border border-t-[#a0a0a0] border-r-[#e3e3e3] border-b-[#e3e3e3] border-l-[#a0a0a0]">
          <div className="flex min-w-0 flex-1 border-t border-l border-[#696969]">
            <div className="flex min-w-0 flex-1 flex-col">
              <div className="flex h-[19px] shrink-0 items-center justify-center pl-[22px]">
                <HorizontalRuler />
              </div>
              <div className="flex min-h-0 flex-1">
                <div className="flex w-[19px] shrink-0 items-center">
                  <VerticalRuler />
                </div>
                <div className="relative flex flex-1 items-center justify-center border-t-2 border-r border-b border-l-2 border-t-[#808080] border-r-[#e3e3e3] border-b-[#e3e3e3] border-l-[#808080] bg-white pl-px">
                  <LayoutPage />
                  <svg viewBox="0 0 172 166" className="absolute bottom-[2px] -left-[2px] h-[166px] w-[172px]" aria-hidden="true">
                    <path d="M1 165l9-24 4 5L172 0 21 152l4 4z" fill="#fc3a3a" />
                  </svg>
                </div>
              </div>
              <ViewBar />
            </div>
            <div className="flex w-5 shrink-0 flex-col pb-5 pl-[2px]">
              <ScrollArrow label="Scroll up" className="rotate-180" />
              <div className="flex-[165]" />
              <div className="flex-[456] bg-[#cdcdcd]" />
              <div className="flex-[165]" />
              <ScrollArrow label="Scroll down" />
            </div>
          </div>
        </div>
      </main>

      <footer className="flex h-[22px] shrink-0 items-center justify-end border-t border-white text-[13px]">
        <span className="h-full w-[287px] border-l border-[#f7f7f7] pl-[5px] leading-[22px] whitespace-pre">
          -13.17  21.26 <span className="text-xs">厘米</span>
        </span>
      </footer>
      <div className="flex h-[9px] shrink-0 bg-[#202e36]">
        <div className="w-[60px]" />
        <div className="w-[430px] border-t border-l border-[#bbb] bg-[#f2f2f2]" />
        <div className="w-[506px]" />
        <div className="w-[152px] bg-[#636c72]" />
        <div className="ml-auto w-[6px] border-l border-[#7b858b]" />
      </div>
      <Watermark />
    </div>
  )
}
